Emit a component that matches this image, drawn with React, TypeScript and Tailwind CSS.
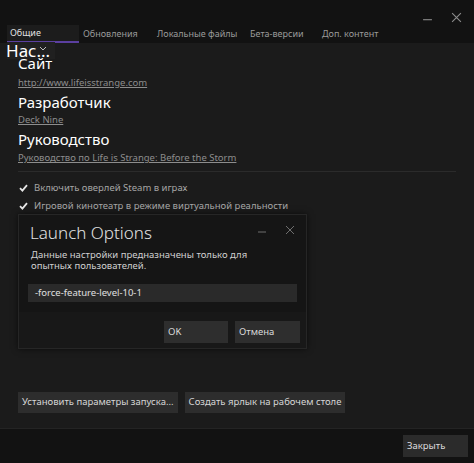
import React from 'react';

const font = { fontFamily: '"Noto Sans", "Open Sans", sans-serif' };

function Check() {
  return (
    <svg width="9" height="8" viewBox="0 0 9 8" className="shrink-0">
      <path d="M1 4.2 L3.4 6.6 L8 1.2" stroke="#e6e6e6" strokeWidth="1.8" fill="none" />
    </svg>
  );
}

function WinControls({ size = 10, color = '#8a8a8a' }: { size?: number; color?: string }) {
  return (
    <div className="flex items-center gap-[18px]">
      <svg width={size} height={size} viewBox="0 0 10 10">
        <path d="M1 7 H9" stroke={color} strokeWidth="1" />
      </svg>
      <svg width={size} height={size} viewBox="0 0 10 10">
        <path d="M1 1 L9 9 M9 1 L1 9" stroke={color} strokeWidth="1" />
      </svg>
    </div>
  );
}

export default function App() {
  const tabs = [
    { t: 'Обновления', w: 'w-[74px]' },
    { t: 'Локальные файлы', w: 'w-[93px]' },
    { t: 'Бета-версии', w: 'w-[72px]' },
    { t: 'Доп. контент', w: 'w-[80px]' },
  ];
  return (
    <div className="relative w-[474px] h-[463px] flex flex-col bg-[#121212] text-[#c8c8c8] overflow-hidden" style={font}>
      {/* title bar */}
      <div className="h-[25px] flex items-end justify-end pr-[12px] pb-[2px]">
        <WinControls size={11} color="#8c8c8c" />
      </div>
      {/* tabs */}
      <div className="h-[18px] flex items-stretch pl-[7px] text-[9px] text-[#9a9a9a]">
        <div className="w-[72px] pl-[3px] flex items-center bg-[#1c1c1c] text-[#e0e0e0] border-b-2 border-[#5b3fa0]">
          Общие
        </div>
        {tabs.map((x) => (
          <div key={x.t} className={`${x.w} flex items-center pl-[4px] whitespace-nowrap`}>
            {x.t}
          </div>
        ))}
      </div>

      {/* content */}
      <div className="relative flex-1 bg-[#1b1b1b] px-[18px] flex flex-col">
        <div className="absolute left-[7px] top-[-1px] h-[17px] w-[48px] bg-[#202020]" />
        <div className="absolute left-[6px] top-[-3px] text-[17px] leading-[21px] text-white flex items-end gap-[2px]">
          Нас...
          <svg width="8" height="6" viewBox="0 0 8 6" className="mb-[9px] -ml-[13px]">
            <path d="M1 1 L4 4 L7 1" stroke="#bbb" strokeWidth="1" fill="none" />
          </svg>
        </div>

        <div className="pt-[10px] relative">
          <div className="text-[15px] leading-[20px] text-white">Сайт</div>
          <div className="text-[9.5px] leading-[20px] text-[#8d8d8d] underline">http://www.lifeisstrange.com</div>
          <div className="text-[15px] leading-[18px] text-white">Разработчик</div>
          <div className="text-[9.5px] leading-[18px] text-[#8d8d8d] underline">Deck Nine</div>
          <div className="text-[15px] leading-[20px] text-white">Руководство</div>
          <div className="text-[9.5px] leading-[18px] text-[#8d8d8d] underline">
            Руководство по Life is Strange: Before the Storm
          </div>
        </div>

        <div className="mt-[4px] h-px w-[438px] bg-[#2b2b2b]" />

        <div className="mt-[9px] flex flex-col gap-[5px] text-[9.5px] leading-[13px] text-[#a6a6a6]">
          <div className="flex items-center gap-[6px] pl-[1px]">
            <Check />
            Включить оверлей Steam в играх
          </div>
          <div className="flex items-center gap-[6px] pl-[1px]">
            <Check />
            Игровой кинотеатр в режиме виртуальной реальности
          </div>
        </div>

        <div className="flex-1" />

        <div className="mb-[15px] flex gap-[7px] text-[9.5px] text-[#d6d6d6]">
          <div className="h-[21px] px-[4px] flex items-center bg-[#2d2d2d]">Установить параметры запуска...</div>
          <div className="h-[21px] px-[4px] flex items-center bg-[#2d2d2d]">Создать ярлык на рабочем столе</div>
        </div>
      </div>

      {/* footer */}
      <div className="h-[35px] border-t border-[#242424] flex items-center justify-end pr-[6px]">
        <div className="w-[65px] h-[22px] pl-[4px] flex items-center bg-[#2b2b2b] text-[9.5px] text-[#dcdcdc]">Закрыть</div>
      </div>

      {/* launch options dialog */}
      <div className="absolute left-[18px] top-[214px] w-[289px] h-[135px] bg-[#151515] border border-[#262626] shadow-[0_0_6px_rgba(0,0,0,0.6)] flex flex-col">
        <div className="flex items-start justify-between pl-[11px] pr-[11px] pt-[6px]">
          <div className="text-[17px] leading-[24px] font-light text-[#e2e2e2]">Launch Options</div>
          <div className="pt-[4px]">
            <WinControls size={10} color="#6e6e6e" />
          </div>
        </div>
        <div className="pl-[12px] pt-[4px] text-[9.5px] leading-[11px] text-[#d0d0d0]">
          Данные настройки предназначены только для
          <br />
          опытных пользователей.
        </div>
        <div className="mx-[9px] mt-[13px] h-[18px] bg-[#2a2a2a] pl-[7px] flex items-center text-[9.5px] text-[#e0e0e0]">
          -force-feature-level-10-1
        </div>
        <div className="flex-1 mt-[10px] bg-[#181818] flex justify-end items-start gap-[7px] pr-[6px] pt-[9px]">
          <div className="w-[64px] h-[22px] pl-[4px] flex items-center bg-[#2e2e2e] text-[9.5px] text-[#dadada]">OK</div>
          <div className="w-[65px] h-[22px] pl-[4px] flex items-center bg-[#2e2e2e] text-[9.5px] text-[#dadada]">Отмена</div>
        </div>
      </div>
    </div>
  );
}
